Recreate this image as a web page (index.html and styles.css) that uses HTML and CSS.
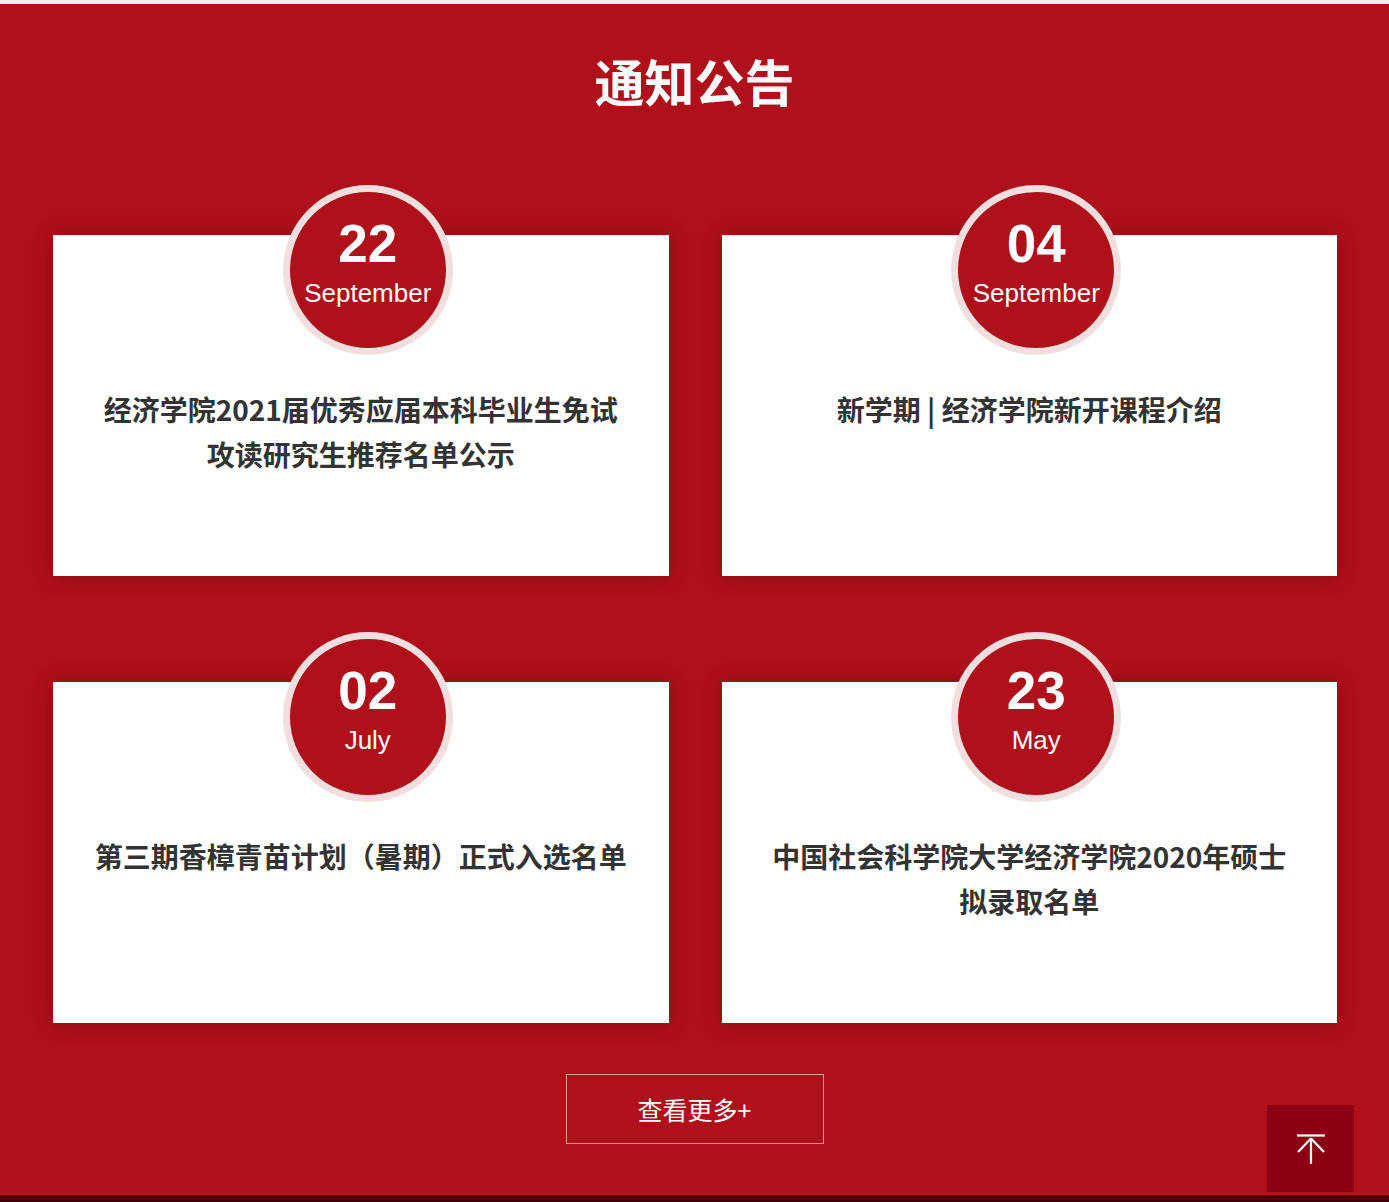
FILE: index.html
```html
<!DOCTYPE html>
<html lang="zh-CN">
<head>
<meta charset="utf-8">
<title>通知公告</title>
<link rel="stylesheet" href="styles.css">
</head>
<body>
<div class="topbar"></div>
<section class="notice">
  <h2 class="notice-title">通知公告</h2>
  <div class="cards">
    <a class="card" href="#">
      <div class="date"><span class="day">22</span><span class="month">September</span></div>
      <p class="card-text">经济学院2021届优秀应届本科毕业生免试攻读研究生推荐名单公示</p>
    </a>
    <a class="card" href="#">
      <div class="date"><span class="day">04</span><span class="month">September</span></div>
      <p class="card-text">新学期 | 经济学院新开课程介绍</p>
    </a>
    <a class="card" href="#">
      <div class="date"><span class="day">02</span><span class="month">July</span></div>
      <p class="card-text">第三期香樟青苗计划（暑期）正式入选名单</p>
    </a>
    <a class="card" href="#">
      <div class="date"><span class="day">23</span><span class="month">May</span></div>
      <p class="card-text">中国社会科学院大学经济学院2020年硕士拟录取名单</p>
    </a>
  </div>
  <a class="more" href="#">查看更多+</a>
</section>
<div class="footer-strip"></div>
<a class="back-top" href="#" aria-label="返回顶部">
  <svg width="30" height="30" viewBox="0 0 30 30" fill="none" stroke="#ffffff" stroke-width="2.2" stroke-linecap="butt">
    <line x1="1" y1="1.5" x2="29" y2="1.5"/>
    <line x1="15" y1="4" x2="15" y2="30"/>
    <line x1="15" y1="4.5" x2="2" y2="18"/>
    <line x1="15" y1="4.5" x2="28" y2="18"/>
  </svg>
</a>
</body>
</html>
```

FILE: styles.css
```css
html, body {
  margin: 0;
  padding: 0;
}
body {
  background: #af101a;
  font-family: "Noto Sans CJK SC", "Noto Sans", sans-serif;
  overflow: hidden;
}
.topbar {
  height: 4px;
  background: #f0efed;
}
.notice {
  background: #af101a;
  padding: 46px 0 51px;
}
.notice-title {
  margin: 0;
  text-align: center;
  color: #ffffff;
  font-size: 50px;
  font-weight: 700;
  line-height: 60px;
  letter-spacing: 0;
}
.cards {
  display: grid;
  grid-template-columns: 1fr 1fr;
  column-gap: 53px;
  row-gap: 106px;
  margin: 125px 52px 0 53px;
}
.card {
  position: relative;
  display: block;
  height: 341px;
  box-sizing: border-box;
  padding: 152px 38px 0;
  background: #ffffff;
  text-decoration: none;
  box-shadow: 0 0 18px rgba(60, 0, 0, 0.35);
}
.date {
  position: absolute;
  top: -50px;
  left: 50%;
  margin-left: -78px;
  width: 156px;
  height: 156px;
  border: 7px solid #f1dfdf;
  border-radius: 50%;
  background: #af101a;
  color: #ffffff;
  font-family: "Liberation Sans", Arial, sans-serif;
  text-align: center;
  display: flex;
  flex-direction: column;
  align-items: center;
  box-sizing: content-box;
}
.day {
  display: block;
  margin-top: 27px;
  font-size: 53px;
  font-weight: 700;
  line-height: 50px;
}
.month {
  display: block;
  margin-top: 9px;
  font-size: 26px;
  line-height: 30px;
}
.card-text {
  margin: 0;
  color: #333333;
  font-size: 28px;
  font-weight: 700;
  line-height: 45px;
  text-align: center;
}
.more {
  display: block;
  width: 258px;
  height: 70px;
  box-sizing: border-box;
  margin: 51px auto 0;
  border: 1px solid rgba(255, 190, 190, 0.75);
  color: #ffffff;
  font-size: 25px;
  line-height: 68px;
  text-align: center;
  text-decoration: none;
}
.footer-strip {
  height: 20px;
  background: #3d0006;
}
.back-top {
  position: fixed;
  right: 35px;
  bottom: 10px;
  width: 87px;
  height: 87px;
  background: #8c0013;
  display: flex;
  align-items: center;
  justify-content: center;
}
```
